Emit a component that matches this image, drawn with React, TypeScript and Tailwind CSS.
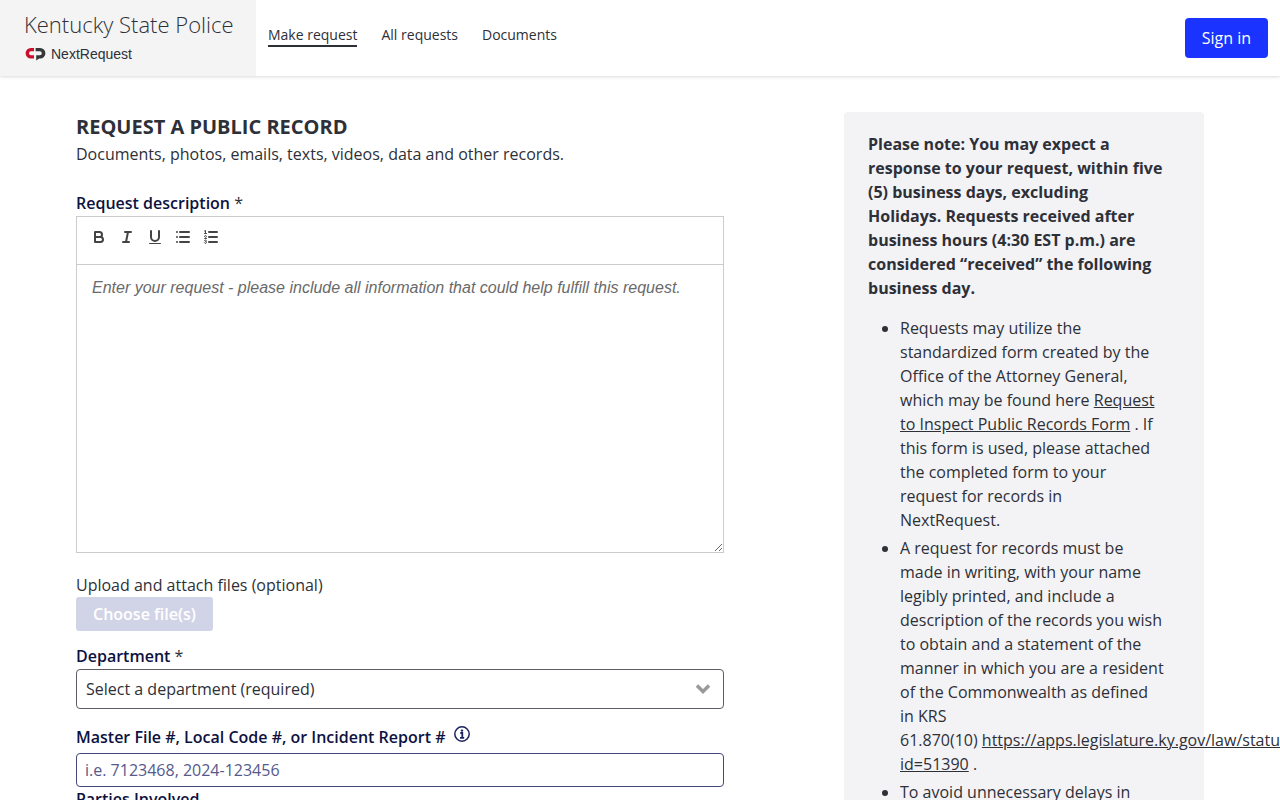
import { useState } from "react";

const navLinks = [
  { label: "Make request", href: "#make-request", active: true },
  { label: "All requests", href: "#requests", active: false },
  { label: "Documents", href: "#documents", active: false },
];

function NextRequestMark() {
  return (
    <svg viewBox="0 0 22 14" className="h-[14px] w-[22px]" fill="none" aria-hidden="true">
      <path d="M10 1H6.8a5.2 5.2 0 0 0 0 10.4H10V8.2H7a2 2 0 0 1 0-4h3z" fill="#c8102e" />
      <path d="M7 5.2h5.4v2H7z" fill="#f4f4f4" />
      <path
        d="M11.6 1h4.6a5.2 5.2 0 0 1 0 10.4h-.9L12.2 13.6V8.2h3.6a2 2 0 0 0 0-4h-4.2z"
        fill="#353739"
      />
    </svg>
  );
}

function BoldIcon() {
  return (
    <>
      <path d="M5 4h4.5a2.5 2.5 0 0 1 0 5H5z" />
      <path d="M5 9h5.5a2.5 2.5 0 0 1 0 5H5z" />
    </>
  );
}

function ItalicIcon() {
  return <path d="M7 4h6M5 14h6M8 14l2-10" />;
}

function UnderlineIcon() {
  return (
    <>
      <path d="M5 3v6a4 4 0 0 0 8 0V3" />
      <rect x="3" y="15" width="12" height="1" rx="0.5" fill="#444" stroke="none" />
    </>
  );
}

function BulletListIcon() {
  return <path d="M6 4h9M6 9h9M6 14h9M3 4h0M3 9h0M3 14h0" />;
}

function OrderedListIcon() {
  return (
    <>
      <path d="M7 4h8M7 9h8M7 14h8" />
      <path d="M2.5 5.5h2M3.5 5.5v-3l-1 .5" strokeWidth="1" />
      <path
        d="M4.5 10.5h-2c0-.2 1.9-1.1 1.9-1.9a.9.9 0 0 0-1.9-.2M2.5 14.8a1 1 0 0 0 1.9-.3.9.9 0 0 0-.9-.9.9.9 0 0 0 .9-.8 1 1 0 0 0-1.9-.2"
        strokeWidth="1"
      />
    </>
  );
}

const tools = [
  { label: "Bold", Icon: BoldIcon },
  { label: "Italic", Icon: ItalicIcon },
  { label: "Underline", Icon: UnderlineIcon },
  { label: "Bulleted list", Icon: BulletListIcon },
  { label: "Numbered list", Icon: OrderedListIcon },
];

function Header() {
  return (
    <header className="relative flex h-[76px] bg-white shadow-[0_1px_3px_rgba(0,0,0,0.15)]">
      <div className="w-64 bg-[#f4f4f4] pt-2 pl-6">
        <a href="#home" className="block text-[22px] leading-8 font-light whitespace-nowrap">
          Kentucky State Police
        </a>
        <a
          href="#nextrequest"
          className="flex items-center gap-[5px] font-['Liberation_Sans',Arial,sans-serif] text-sm leading-7"
        >
          <NextRequestMark />
          NextRequest
        </a>
      </div>
      <nav className="flex flex-1 gap-6 px-3 pt-6">
        {navLinks.map((link) => (
          <a
            key={link.label}
            href={link.href}
            className={
              link.active
                ? "h-[23px] border-b-2 border-[#2e3038] text-sm leading-[22px]"
                : "h-[23px] text-sm leading-[22px]"
            }
          >
            {link.label}
          </a>
        ))}
      </nav>
      <button type="button" className="mt-[18px] mr-3 h-10 rounded bg-[#1a33ff] px-[17px] text-white">
        Sign in
      </button>
    </header>
  );
}

function RequestForm() {
  const [description, setDescription] = useState("");
  const [department, setDepartment] = useState("");
  const [fileNumber, setFileNumber] = useState("");

  return (
    <form className="col-span-7">
      <h1 className="text-xl leading-[30px] font-bold">REQUEST A PUBLIC RECORD</h1>
      <p>Documents, photos, emails, texts, videos, data and other records.</p>

      <label htmlFor="description" className="mt-[25px] block pb-px">
        <span className="font-semibold text-[#0d1240]">Request description</span> *
      </label>
      <div className="border border-[#ccc]">
        <div className="flex h-12 border-b border-[#ccc] p-2">
          {tools.map(({ label, Icon }) => (
            <button key={label} type="button" aria-label={label} className="h-6 w-7 px-[5px] py-[3px]">
              <svg
                viewBox="0 0 18 18"
                className="size-[18px]"
                fill="none"
                stroke="#444"
                strokeWidth="2"
                strokeLinecap="round"
                strokeLinejoin="round"
                aria-hidden="true"
              >
                <Icon />
              </svg>
            </button>
          ))}
        </div>
        <textarea
          id="description"
          value={description}
          onChange={(event) => setDescription(event.target.value)}
          placeholder="Enter your request - please include all information that could help fulfill this request."
          className="block h-[287px] w-full resize-y px-[15px] py-3 font-['Liberation_Sans',Arial,sans-serif] leading-[22px] outline-none placeholder:text-[#6a6a6a] placeholder:italic"
        />
      </div>

      <p className="mt-5">Upload and attach files (optional)</p>
      <button type="button" disabled className="block h-[34px] rounded-[3px] bg-[#d1d4e6] px-[17px] font-semibold text-white">
        Choose file(s)
      </button>

      <label htmlFor="department" className="mt-[13px] block pb-px">
        <span className="font-semibold text-[#0d1240]">Department</span> *
      </label>
      <div className="relative">
        <select
          id="department"
          value={department}
          onChange={(event) => setDepartment(event.target.value)}
          className="block h-10 w-full appearance-none rounded border border-[#5c5e66] bg-white px-[9px]"
        >
          <option value="">Select a department (required)</option>
        </select>
        <svg
          viewBox="0 0 14 10"
          className="pointer-events-none absolute top-[15px] right-[14px] h-[10px] w-[14px]"
          fill="none"
          stroke="#999"
          strokeWidth="3.4"
          aria-hidden="true"
        >
          <path d="M1 1.5l6 6 6-6" />
        </svg>
      </div>

      <div className="mt-4 flex gap-2 pb-1">
        <label htmlFor="file-number" className="font-semibold text-[#0d1240]">
          Master File #, Local Code #, or Incident Report #
        </label>
        <button type="button" aria-label="More information" className="size-[18px] p-px">
          <svg viewBox="0 0 16 16" className="size-4" fill="none" stroke="#1c2260" strokeWidth="1.5" aria-hidden="true">
            <circle cx="8" cy="8" r="7.2" />
            <path d="M6.3 7h2v4.6M6 11.8h4.2" strokeWidth="1.8" />
            <circle cx="8" cy="4.6" r="1.2" fill="#1c2260" stroke="none" />
          </svg>
        </button>
      </div>
      <input
        id="file-number"
        type="text"
        value={fileNumber}
        onChange={(event) => setFileNumber(event.target.value)}
        placeholder="i.e. 7123468, 2024-123456"
        className="block h-[34px] w-full rounded border border-[#44497a] px-2 placeholder:text-[#555a8c]"
      />
      <p className="font-semibold text-[#0d1240]">Parties Involved</p>
    </form>
  );
}

function Notice() {
  return (
    <aside className="col-span-4 col-start-9 rounded bg-[#f3f3f6] px-6 py-5">
      <p className="font-bold">
        Please note: You may expect a response to your request, within five (5) business days, excluding
        Holidays.&nbsp;Requests received after business hours (4:30 EST p.m.) are considered “received” the following
        business day.
      </p>
      <ul className="mt-4 list-disc space-y-1 pr-4 pl-8">
        <li>
          Requests may utilize the standardized form created by the Office of the Attorney General, which may be found
          here{" "}
          <a href="#form" className="underline">
            Request to Inspect Public Records Form
          </a>{" "}
          . If this form is used, please attached the completed form to your request for records in NextRequest.
        </li>
        <li>
          A request for records must be made in writing, with your name legibly printed, and include a description of
          the records you wish to obtain and a statement of the manner in which you are a resident of the Commonwealth
          as defined in&nbsp;KRS 61.870(10)&nbsp;
          <a href="#statute" className="underline">
            https://apps.legislature.ky.gov/law/statutes/statute.aspx?
            <wbr />
            id=51390
          </a>{" "}
          .
        </li>
        <li>To avoid unnecessary delays in</li>
      </ul>
    </aside>
  );
}

export default function App() {
  return (
    <div className="min-h-screen overflow-x-clip bg-white font-['Open_Sans',sans-serif] text-base text-[#2e3038]">
      <Header />
      <main className="mx-auto grid max-w-[1176px] grid-cols-12 gap-x-6 px-6 pt-9">
        <RequestForm />
        <Notice />
      </main>
    </div>
  );
}
